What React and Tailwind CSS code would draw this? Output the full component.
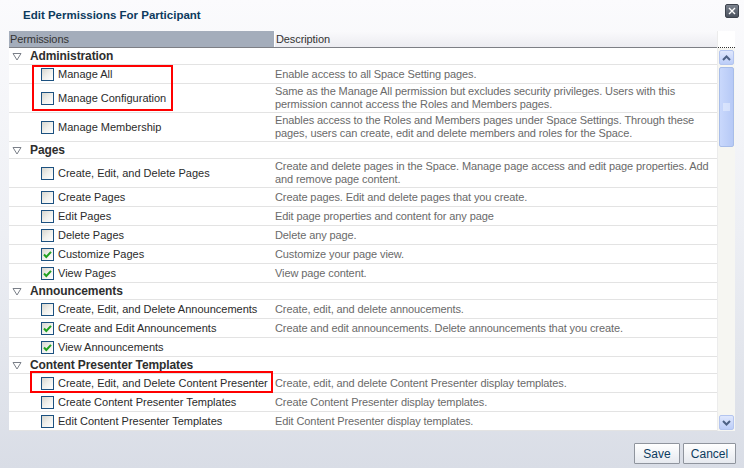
import React from "react";

const rows = [
  { g: "Administration" },
  { l: "Manage All", d: ["Enable access to all Space Setting pages."] },
  {
    l: "Manage Configuration",
    d: [
      "Same as the Manage All permission but excludes security privileges. Users with this",
      "permission cannot access the Roles and Members pages.",
    ],
  },
  {
    l: "Manage Membership",
    d: [
      "Enables access to the Roles and Members pages under Space Settings. Through these",
      "pages, users can create, edit and delete members and roles for the Space.",
    ],
  },
  { g: "Pages" },
  {
    l: "Create, Edit, and Delete Pages",
    d: [
      "Create and delete pages in the Space. Manage page access and edit page properties. Add",
      "and remove page content.",
    ],
  },
  { l: "Create Pages", d: ["Create pages. Edit and delete pages that you create."] },
  { l: "Edit Pages", d: ["Edit page properties and content for any page"] },
  { l: "Delete Pages", d: ["Delete any page."] },
  { l: "Customize Pages", d: ["Customize your page view."], c: true },
  { l: "View Pages", d: ["View page content."], c: true },
  { g: "Announcements" },
  { l: "Create, Edit, and Delete Announcements", d: ["Create, edit, and delete annoucements."] },
  {
    l: "Create and Edit Announcements",
    d: ["Create and edit announcements. Delete announcements that you create."],
    c: true,
  },
  { l: "View Announcements", d: [], c: true },
  { g: "Content Presenter Templates" },
  {
    l: "Create, Edit, and Delete Content Presenter",
    d: ["Create, edit, and delete Content Presenter display templates."],
  },
  { l: "Create Content Presenter Templates", d: ["Create Content Presenter display templates."] },
  { l: "Edit Content Presenter Templates", d: ["Edit Content Presenter display templates."] },
];

function Checkbox({ checked }) {
  return (
    <span className="w-[13px] h-[13px] shrink-0 border border-[#1c5180] bg-gradient-to-br from-[#d6d6cf] via-[#f0f0ec] to-white flex items-center justify-center">
      {checked && (
        <svg width="9" height="9" viewBox="0 0 9 9">
          <path d="M1 4.5 L3.3 7 L8 1.8" fill="none" stroke="#21a121" strokeWidth="2" />
        </svg>
      )}
    </span>
  );
}

function Triangle() {
  return (
    <svg width="10" height="9" viewBox="0 0 10 9" className="shrink-0">
      <path d="M1 1.5 H9 L5 8 Z" fill="white" stroke="#7a7f88" strokeWidth="1" />
    </svg>
  );
}

function Row({ row }) {
  if (row.g) {
    return (
      <div className="h-[17px] flex items-center border-b border-[#e3e3e3] pl-[3px]">
        <Triangle />
        <span className="ml-[8px] text-[12px] font-bold text-[#2e2e2e] tracking-[-0.1px]">{row.g}</span>
      </div>
    );
  }
  const tall = row.d.length > 1;
  return (
    <div className={`flex border-b border-[#e3e3e3] ${tall ? "h-[29px]" : "h-[19px]"}`}>
      <div className="w-[265px] shrink-0 flex items-center pl-[32px]">
        <Checkbox checked={row.c} />
        <span className="ml-[4px] text-[11px] text-[#2b2b2b] whitespace-nowrap">{row.l}</span>
      </div>
      <div className="flex-1 flex flex-col justify-center pl-[1px] text-[11px] leading-[13px] text-[#6a6a6a] tracking-[-0.1px] whitespace-nowrap">
        {row.d.map((t, i) => (
          <span key={i}>{t}</span>
        ))}
      </div>
    </div>
  );
}

function ScrollButton({ up }) {
  return (
    <div className="w-[15px] h-[15px] rounded-[2px] border border-[#b4c5ef] bg-gradient-to-b from-[#e0e8fd] to-[#bccdf8] flex items-center justify-center">
      <svg width="9" height="6" viewBox="0 0 9 6">
        <path d={up ? "M1 5 L4.5 1.5 L8 5" : "M1 1 L4.5 4.5 L8 1"} fill="none" stroke="#4d6185" strokeWidth="2" />
      </svg>
    </div>
  );
}

export default function App() {
  return (
    <div
      className="relative w-[744px] h-[468px] overflow-hidden bg-gradient-to-b from-[#fbfbfd] via-[#edeff4] to-[#d9dde6]"
      style={{ fontFamily: '"Liberation Sans", Arial, sans-serif' }}
    >
      <div className="h-[31px] flex items-center pl-[23px]">
        <h1 className="text-[11.5px] font-bold text-[#0d3b5e]">Edit Permissions For Participant</h1>
      </div>
      <button className="absolute left-[725px] top-[4px] w-[14px] h-[14px] rounded-[2px] bg-gradient-to-b from-[#7b828e] to-[#4b525e] border border-[#3d434d] flex items-center justify-center">
        <svg width="8" height="8" viewBox="0 0 8 8">
          <path d="M1 1 L7 7 M7 1 L1 7" stroke="white" strokeWidth="1.4" />
        </svg>
      </button>

      <div className="ml-[9px] w-[726px] h-[400px] flex bg-white">
        <div className="w-[708px] flex flex-col">
          <div className="h-[17px] flex border-b border-[#7d7f85] text-[11px] text-[#333] tracking-[-0.1px]">
            <div className="w-[265px] bg-[#a4adbb] flex items-center pl-[1px]">Permissions</div>
            <div className="flex-1 border-l border-white bg-gradient-to-b from-[#fafafc] to-[#ececf1] flex items-center pl-[1px]">
              Description
            </div>
          </div>
          {rows.map((r, i) => (
            <Row key={i} row={r} />
          ))}
        </div>
        <div className="w-[18px] flex flex-col bg-[#f6f6f2] border-l border-[#ececec]">
          <div className="h-[17px] bg-white border-b border-dotted border-[#333]"></div>
          <div className="pl-[1px] pt-[2px] flex flex-col gap-[2px]">
            <ScrollButton up />
            <div className="w-[15px] h-[80px] rounded-[2px] border border-[#a8bde9] bg-gradient-to-r from-[#c9d8fc] to-[#b6c9f6] flex items-center justify-center">
              <svg width="7" height="8" viewBox="0 0 7 8">
                <path d="M0 1 H7 M0 3 H7 M0 5 H7 M0 7 H7" stroke="#eef3ff" strokeWidth="1" />
              </svg>
            </div>
          </div>
          <div className="flex-1"></div>
          <div className="pl-[1px] pb-[1px]">
            <ScrollButton />
          </div>
        </div>
      </div>

      <div className="flex justify-end gap-[3px] pr-[8px] pt-[12px]">
        <button className="w-[46px] h-[21px] border border-[#8f949d] rounded-[1px] bg-gradient-to-b from-white to-[#e6e9ef] text-[12px] text-[#0d3b5e]">
          Save
        </button>
        <button className="w-[53px] h-[21px] border border-[#8f949d] rounded-[1px] bg-gradient-to-b from-white to-[#e6e9ef] text-[12px] text-[#0d3b5e]">
          Cancel
        </button>
      </div>

      <div className="absolute left-[32px] top-[65px] w-[141px] h-[46px] border-2 border-[#ff0000]"></div>
      <div className="absolute left-[30px] top-[371px] w-[243px] h-[22px] border-2 border-[#ff0000]"></div>
    </div>
  );
}
